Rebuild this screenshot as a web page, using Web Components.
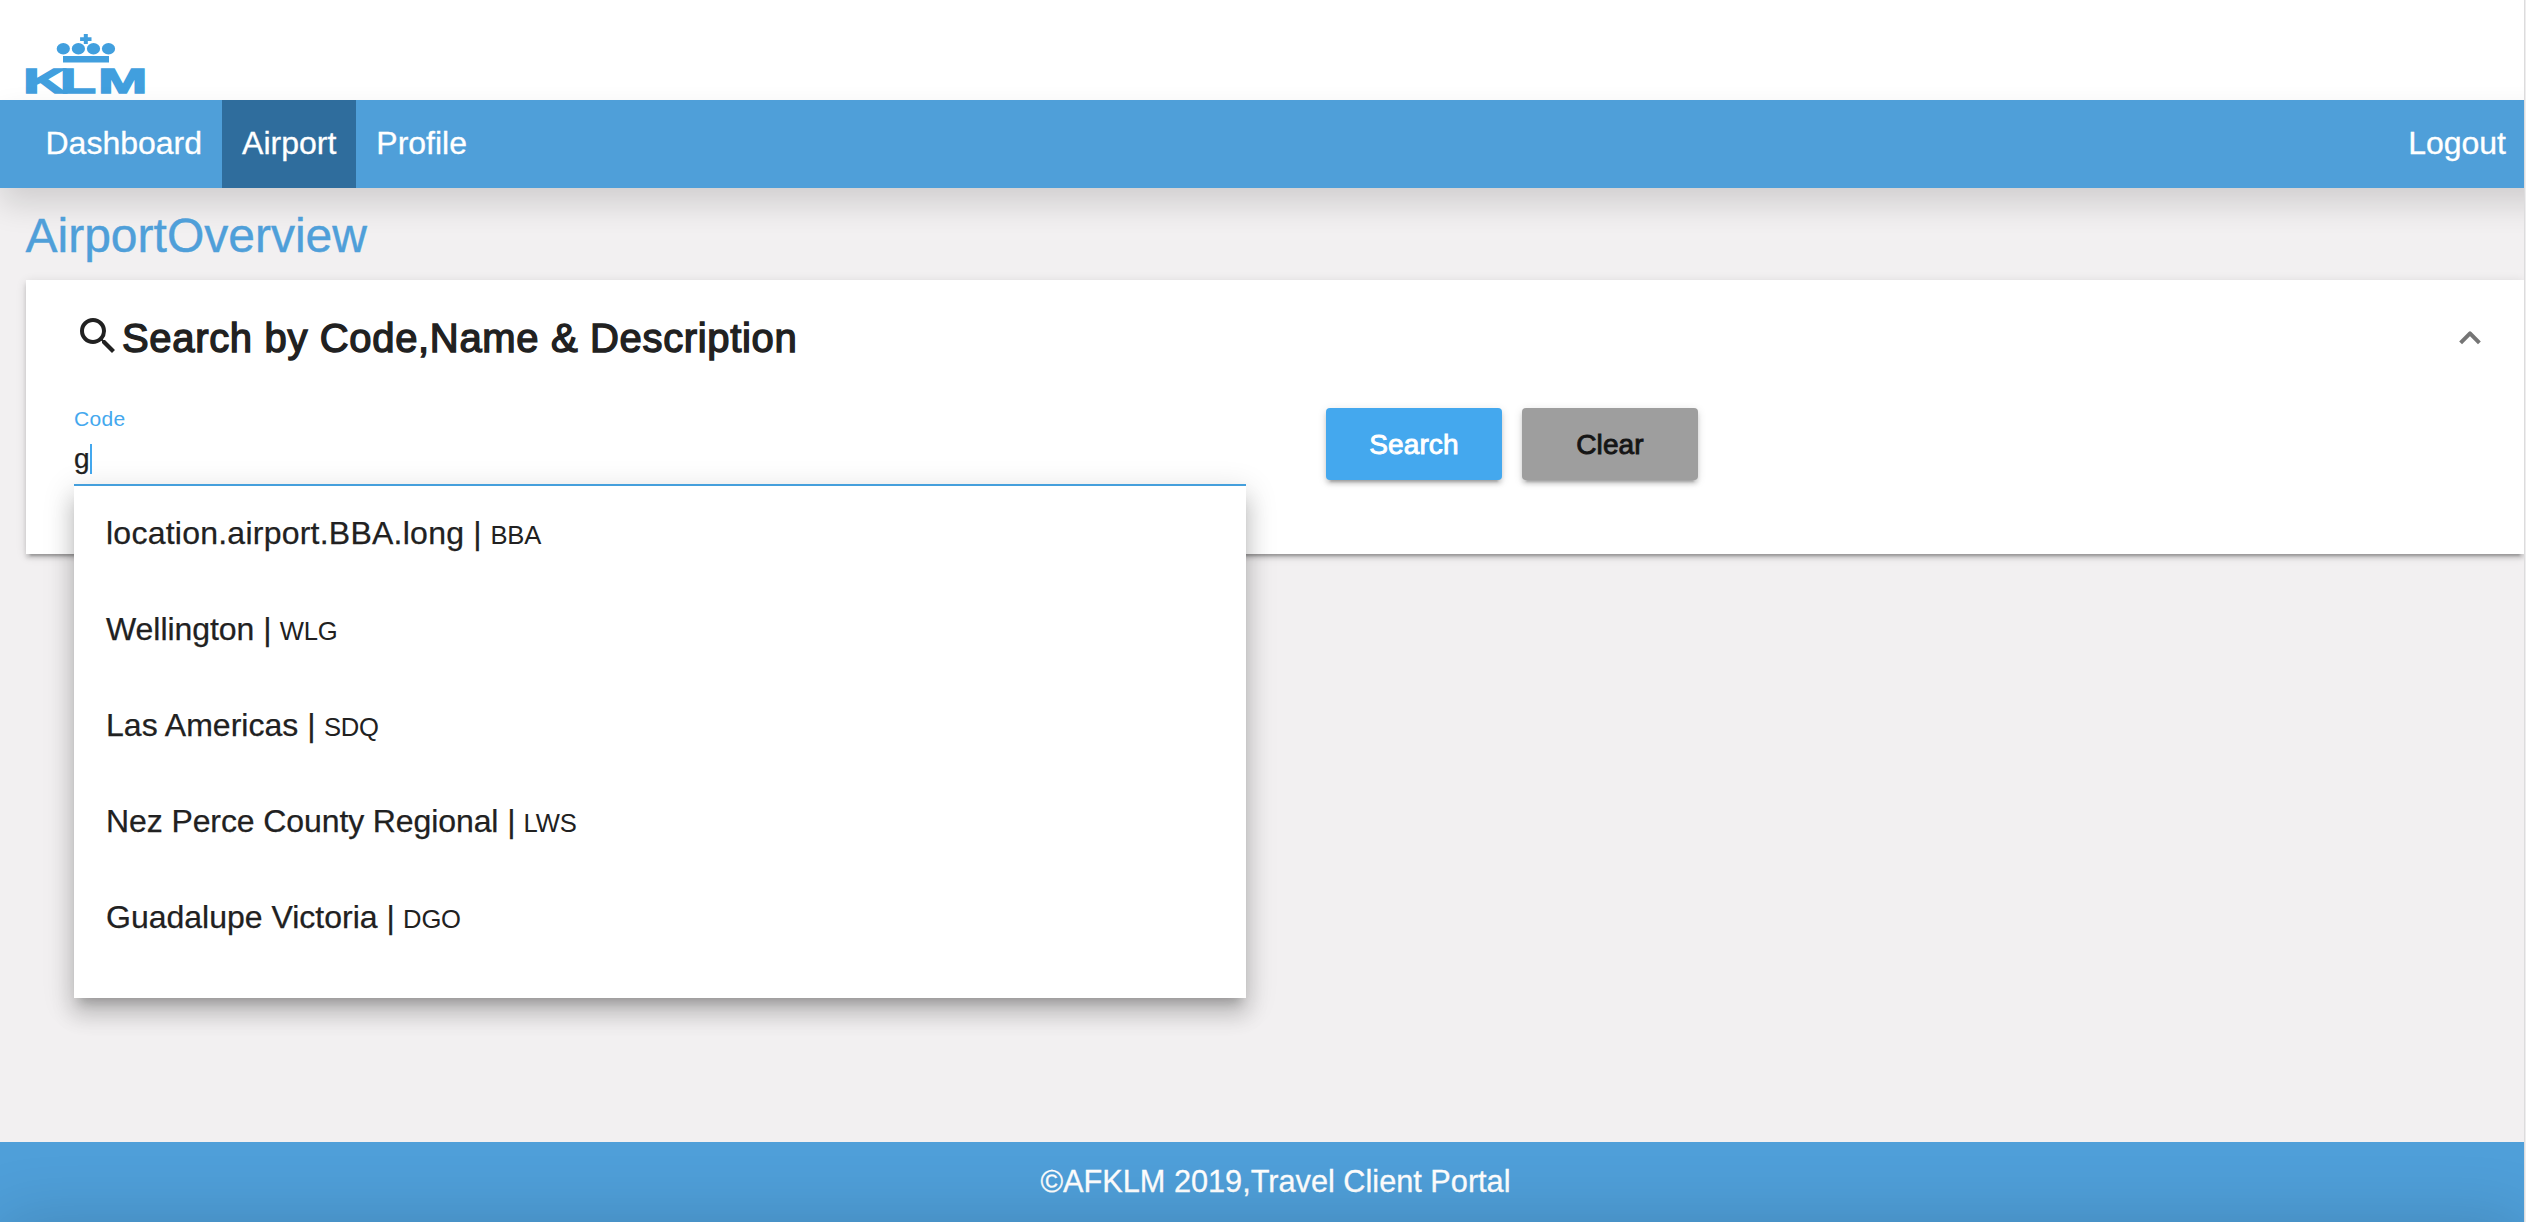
<!DOCTYPE html>
<html lang="en">
<head>
<meta charset="utf-8">
<title>Airport Overview</title>
<style>
html,body{margin:0;height:100%;overflow:hidden}
body{font-family:"Liberation Sans",Arial,sans-serif;background:#f2f0f1;color:#212121}
</style>
</head>
<body>
<portal-app></portal-app>
<script>
const define=(name,html)=>{
  const t=document.createElement('template');
  t.innerHTML=html;
  customElements.define(name,class extends HTMLElement{
    constructor(){super();this.attachShadow({mode:'open'}).append(t.content.cloneNode(true));}
  });
};

define('klm-logo',`<style>:host{display:block;width:120px;height:60px}svg{display:block;overflow:visible}text{font:700 35px "Liberation Sans",Arial,sans-serif;stroke:#419fde;stroke-width:1.600px}</style>
<svg width="120" height="60" viewBox="0 0 120 60" fill="#419fde">
<path d="M57.800 0h4v3.300h3.700v3.700h-3.700v3h-4v-3h-3.700v-3.700h3.700z"/>
<ellipse cx="37.300" cy="14.700" rx="6.600" ry="5.700"/><ellipse cx="52.400" cy="14.700" rx="6.600" ry="5.700"/><ellipse cx="67.500" cy="14.700" rx="6.600" ry="5.700"/><ellipse cx="82.500" cy="14.700" rx="6.600" ry="5.700"/>
<path d="M37 22h46v6.500H37z"/>
<text transform="scale(1.68 1)" x="-1.600 20.300 43" y="59.200">KLM</text>
</svg>`);

define('nav-item',`<style>:host{display:flex;align-items:center;padding:0 20px;height:100%;box-sizing:border-box;font-size:32px;color:#fff;-webkit-text-stroke:.3px #fff}:host([active]){background:#2f6d9d}span{line-height:36px;margin-top:-2px}</style><span><slot></slot></span>`);

define('portal-header',`<style>:host{display:block;flex:none}
.brand{height:100px;box-sizing:border-box;padding:34px 0 0 26px;background:#fff;width:2524px}
nav{height:88px;display:flex;padding:0 38px 0 25.500px;margin-right:-40px;background:#4f9fd9;position:relative;box-shadow:0 16px 32px 0 rgba(0,0,0,.14)}
.gap{flex:1}</style>
<div class="brand"><klm-logo></klm-logo></div>
<nav><nav-item>Dashboard</nav-item><nav-item active>Airport</nav-item><nav-item>Profile</nav-item><div class="gap"></div><nav-item>Logout</nav-item></nav>`);

define('flat-button',`<style>:host{display:flex;align-items:center;justify-content:center;width:176px;height:72px;border-radius:4px;background:#44a8ee;color:#fff;font-size:28px;box-shadow:0 6px 2px -4px rgba(0,0,0,.2),0 4px 4px 0 rgba(0,0,0,.14),0 2px 10px 0 rgba(0,0,0,.12)}
:host([muted]){background:#9e9e9e;color:#151515}span{-webkit-text-stroke:.9px currentColor;letter-spacing:.1px;padding-top:1px}</style><span><slot></slot></span>`);

define('airport-option',`<style>:host{display:flex;align-items:baseline;height:96px;line-height:94px;padding:0 32px;font-size:32px;white-space:pre;letter-spacing:var(--ls,-.1px)}
small{font-size:25.600px;letter-spacing:-.2px;margin-left:-.6px}span{-webkit-text-stroke:.25px currentColor}</style><span><slot></slot> | </span><small><slot name="code"></slot></small>`);

define('code-field',`<style>:host{display:block;width:1172px;position:relative}
label{display:block;font-size:21px;line-height:24px;margin-top:-1px;color:#44a8ee;letter-spacing:.3px}
.value{display:flex;align-items:center;height:30px;margin-top:13px;font-size:28px}
.value span{-webkit-text-stroke:.25px currentColor;letter-spacing:.4px}
.caret{width:2px;height:30px;background:#44a8ee}
.line{height:2px;background:#449fdc;margin-top:10px;position:relative;z-index:2}
.panel{position:absolute;left:0;top:78px;width:100%;height:512px;background:#fff;overflow:hidden}
.shade{position:absolute;left:0;top:78px;width:100%;height:512px;box-shadow:0 10px 10px -6px rgba(0,0,0,.2),0 16px 20px 2px rgba(0,0,0,.14),0 6px 28px 4px rgba(0,0,0,.12)}</style>
<label>Code</label><div class="value"><span>g</span><i class="caret"></i></div><div class="line"></div>
<div class="shade"></div><div class="panel"><slot></slot></div>`);

define('search-card',`<style>:host{display:block;height:274px;width:2498px;margin-left:26px;background:#fff;box-sizing:border-box;padding:0 48px;box-shadow:0 6px 2px -4px rgba(0,0,0,.2),0 4px 4px 0 rgba(0,0,0,.14),0 2px 10px 0 rgba(0,0,0,.12)}
header{height:128px;display:flex;align-items:center;box-sizing:border-box;padding-bottom:14px}
h2{margin:1px auto 0 0;font-size:40px;font-weight:400;-webkit-text-stroke:1.400px #212121;line-height:48px;letter-spacing:.66px}
.mag{margin:0 0 2px 0;width:48px;height:48px}
.chev{margin:1px -18px 0 0;width:48px;height:48px}
.row{display:flex;align-items:flex-start}
.buttons{display:flex;gap:20px;margin-left:80px}</style>
<header><svg class="mag" viewBox="0 0 24 24" fill="#212121"><path d="M15.500 14h-.79l-.28-.27A6.471 6.471 0 0 0 16 9.500 6.500 6.500 0 1 0 9.500 16c1.610 0 3.090-.59 4.230-1.570l.27.28v.79l5 4.990L20.490 19l-4.990-5zm-6 0C7.010 14 5 11.990 5 9.500S7.010 5 9.500 5 14 7.010 14 9.500 11.990 14 9.500 14z"/></svg><h2>Search by Code,Name &amp; Description</h2><svg class="chev" viewBox="0 0 48 48" fill="none" stroke="#757575" stroke-width="4" stroke-linejoin="round"><path d="M14.600 28.800 24 19.400l9.400 9.400"/></svg></header>
<div class="row"><code-field>
<airport-option style="--ls:.24px">location.airport.BBA.long<span slot="code">BBA</span></airport-option>
<airport-option style="--ls:-.05px">Wellington<span slot="code">WLG</span></airport-option>
<airport-option style="--ls:.02px">Las Americas<span slot="code">SDQ</span></airport-option>
<airport-option>Nez Perce County Regional<span slot="code">LWS</span></airport-option>
<airport-option style="--ls:0px">Guadalupe Victoria<span slot="code">DGO</span></airport-option>
</code-field><div class="buttons"><flat-button>Search</flat-button><flat-button muted>Clear</flat-button></div></div>`);

define('portal-footer',`<style>:host{display:flex;align-items:center;justify-content:center;height:80px;flex:none;background:#4f9fd9;color:#fff;font-size:30.700px;padding-left:27px;box-sizing:border-box;position:relative;overflow:hidden}
i{position:absolute;left:0;right:0;top:80px;height:90px;box-shadow:0 0 70px rgba(0,0,0,.16)}
span{position:relative;-webkit-text-stroke:.3px #fff}</style><span>©AFKLM 2019,Travel Client Portal</span><i></i>`);

define('portal-app',`<style>:host{display:flex;height:1222px}
main{width:2524px;flex:none;display:flex;flex-direction:column;position:relative}
h1{margin:0;font-weight:400;font-size:48px;line-height:56px;color:#4f9fd9;-webkit-text-stroke:.4px #4f9fd9;padding:20px 0 16px 25.500px;position:relative}
.grow{flex:1}
aside{width:2px;box-sizing:border-box;border-left:1px solid #dcdcdd;background:#eeedee;position:relative}</style>
<main><portal-header></portal-header><h1>AirportOverview</h1><search-card></search-card><div class="grow"></div><portal-footer></portal-footer></main><aside></aside>`);
</script>
</body>
</html>
